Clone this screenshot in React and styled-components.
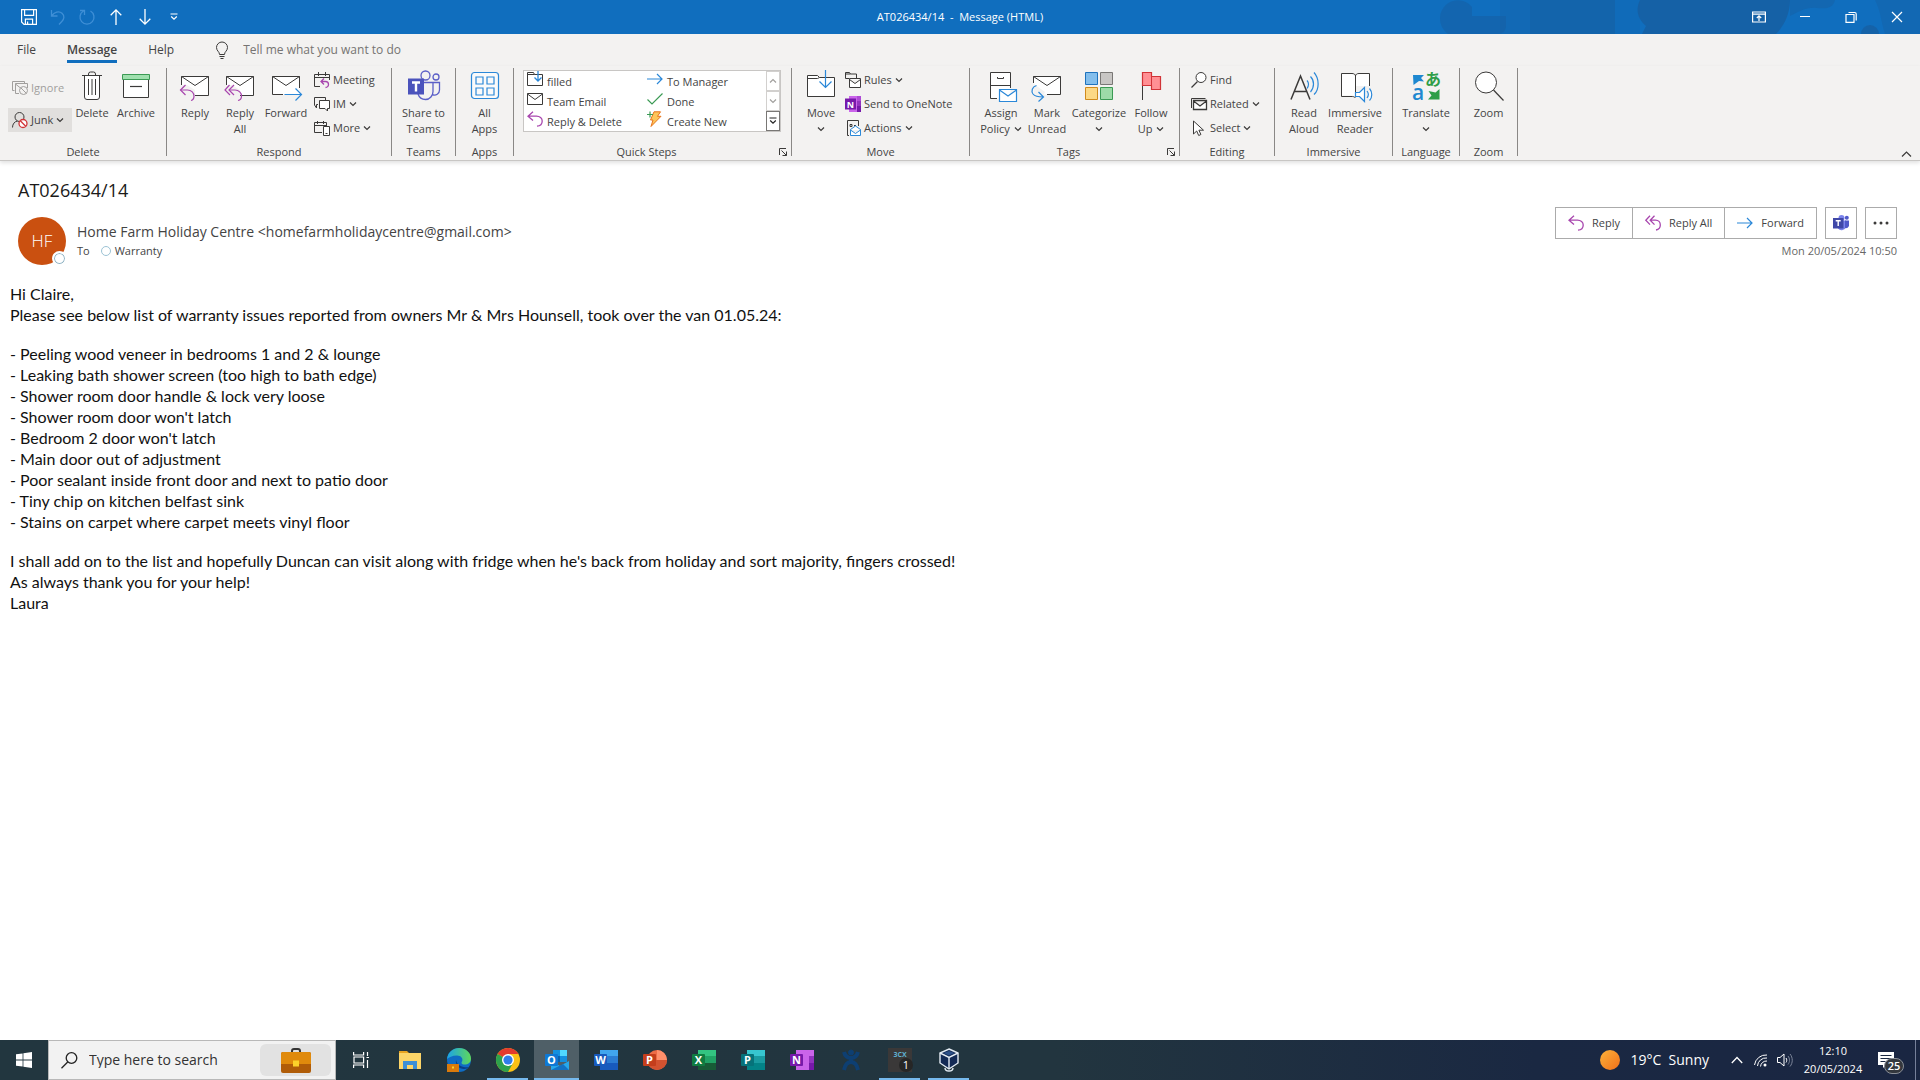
import React from 'react';
import styled, { createGlobalStyle } from 'styled-components';

const GlobalStyle = createGlobalStyle`
  * {
    box-sizing: border-box;
  }

  body {
    margin: 0;
    background: #fff;
    color: #444;
    font-family: 'Open Sans', 'Noto Sans', sans-serif;
    font-size: 11px;
    line-height: 16px;
  }

  button,
  input {
    margin: 0;
    padding: 0;
    border: 0;
    background: none;
    color: inherit;
    font: inherit;
  }

  svg {
    display: block;
    flex: none;
    overflow: visible;
  }
`;

/* ---------- icons ---------- */

const dark = '#3b3a39';
const blue = '#2b88d8';
const purple = '#a846ae';

const Icon = ({ w = 16, h = w, stroke = dark, children, ...rest }) => (
  <svg
    width={w}
    height={h}
    viewBox={`0 0 ${w} ${h}`}
    fill="none"
    stroke={stroke}
    strokeWidth="1"
    aria-hidden="true"
    {...rest}
  >
    {children}
  </svg>
);

const Chevron = ({ up, ...rest }) => (
  <Icon w={8} h={6} strokeWidth="1.2" {...rest}>
    <path d={up ? 'M1 4.5l3-3 3 3' : 'M1 1.5l3 3 3-3'} />
  </Icon>
);

const SaveIcon = () => (
  <Icon stroke="#fff" strokeWidth="1.2">
    <path d="M.6.6h14.8v14.8H3L.6 13zM3.6.8v5.6h9V.8M4.4 15.2v-5h7.2v5M6.6 15v-2.4" />
  </Icon>
);

const UndoIcon = () => (
  <Icon stroke="#3f8fd6" strokeWidth="1.3">
    <path d="M1.5 1v6h6M1.8 6.8C4 3 9 1.600 12 4.200c3 2.600 2 6 0 8L9 15.500" />
  </Icon>
);

const RedoIcon = () => (
  <Icon stroke="#3f8fd6" strokeWidth="1.3">
    <path d="M4.500 2A7 7 0 1 0 11.500 2M1 1.500h4.500V6" />
  </Icon>
);

const UpIcon = () => (
  <Icon w={12} h={16} stroke="#fff" strokeWidth="1.3">
    <path d="M6 16V1M.7 6.200L6 .9l5.300 5.300" />
  </Icon>
);

const DownIcon = () => (
  <Icon w={12} h={16} stroke="#fff" strokeWidth="1.3">
    <path d="M6 0v15M.7 9.800L6 15.100l5.300-5.300" />
  </Icon>
);

const CustomizeIcon = ({ stroke = '#fff' }) => (
  <Icon w={8} h={8} stroke={stroke} strokeWidth="1.2">
    <path d="M.5 1h7M1.200 3.500L4 6.200l2.800-2.700" />
  </Icon>
);

const BulbIcon = () => (
  <Icon w={14} h={17}>
    <path d="M4.500 12.500c0-3-3-3.500-3-7a5.500 5.500 0 0 1 11 0c0 3.500-3 4-3 7zM4.500 14.500h5M5.500 16.500h3" />
  </Icon>
);

const IgnoreIcon = () => (
  <Icon stroke="#a19f9d">
    <path d="M2.500 10.500h-2v-9h12v2M7 13.500H3.500v-10h12V8M3.500 4l5 4" />
    <circle cx="11.500" cy="10.500" r="4" fill="#f3f2f1" />
    <path d="M8.800 7.800l5.400 5.400" />
  </Icon>
);

const JunkIcon = () => (
  <Icon>
    <circle cx="7.500" cy="5" r="4.500" />
    <path d="M.5 15.500C.5 12 2.500 9.500 5.500 9" />
    <circle cx="11" cy="11.500" r="4" fill="#fff" stroke="#d13438" strokeWidth="1.300" />
    <path d="M8.300 8.800l5.400 5.400" stroke="#d13438" strokeWidth="1.300" />
  </Icon>
);

const TrashIcon = () => (
  <Icon w={32}>
    <path d="M8.500 5.500V27a2.500 2.500 0 0 0 2.500 2.500h10a2.500 2.500 0 0 0 2.500-2.500V5.500z" fill="#fff" />
    <path d="M6 5.500h20M12.500 5.500V4a2 2 0 0 1 2-2h3a2 2 0 0 1 2 2v1.500M12.500 9v16M16 9v16M19.500 9v16" />
  </Icon>
);

const ArchiveIcon = () => (
  <Icon w={32}>
    <path d="M3.500 9.500h25v18h-25z" fill="#fff" />
    <path d="M2.500 4.500h27v5h-27z" fill="#9fe0ae" stroke="#3b9a54" />
    <path d="M10 16.500h12" strokeWidth="1.200" />
  </Icon>
);

const Envelope = () => (
  <>
    <path d="M2.500 6.500h27v19h-27z" fill="#fff" stroke="none" />
    <path d="M10 25.500h19.500v-19h-27V17M2.500 6.500L16 15.500l13.500-9" />
  </>
);

const ReplyLargeIcon = ({ all }) => (
  <Icon w={32}>
    <Envelope />
    <path d="M0 15h8l8 5v12H4z" fill="#f3f2f1" stroke="none" />
    <path d="M16 25.500h4" />
    <g stroke={purple} strokeWidth="1.200">
      <path d={all ? 'M5.500 15L1 20l5 5M10 15l-5 5 5 5' : 'M6.500 15l-5 5 5 5'} />
      <path d={all ? 'M5 20h6c4 0 6.500 3 6.500 6 0 2-1 4-3.500 4.500' : 'M1.500 20h7c4 0 6.500 3 6.500 6 0 2-1 4-3 4.500'} />
    </g>
  </Icon>
);

const ForwardLargeIcon = () => (
  <Icon w={32}>
    <path d="M2.500 6.500h27v18h-27z" fill="#fff" stroke="none" />
    <path d="M29.500 18V6.500h-27v18H13M2.500 6.500L16 15.500l13.500-9" />
    <path d="M14.500 24.500H31M25.500 18.500l6 6-6 6" stroke={blue} strokeWidth="1.200" />
  </Icon>
);

const MeetingIcon = () => (
  <Icon>
    <path d="M6 14.500H.5v-12h15V8M.5 5.500h15M4.500 0v4M11.500 0v4" />
    <path d="M10 6.500l-3 3 3 3M7 9.500h4.500a2.500 2.500 0 0 1 0 6" stroke={purple} strokeWidth="1.300" />
  </Icon>
);

const ChatIcon = () => (
  <Icon>
    <path d="M4 8.500H2.500V12L.5 9V1.500h11V4" />
    <path d="M5.500 4.500h10v8h-2V15L11 12.500H5.500z" fill="#fff" />
  </Icon>
);

const MoreIcon = () => (
  <Icon>
    <path d="M8 12.500H.5v-10h12V6M.5 5.500h12M3.500 1v3M9.500 1v3" />
    <path d="M9.500 6.500h6v9h-6zM11.500 13.500h2" fill="#fff" />
  </Icon>
);

const TeamsLargeIcon = () => (
  <Icon w={32} stroke="#5b5fc7">
    <circle cx="17.500" cy="5.500" r="4.500" strokeWidth="1.300" />
    <circle cx="28" cy="7" r="3" strokeWidth="1.300" />
    <path d="M16 12.500h9v9c0 4-3 8-7.500 8S11 27 10 24M25 12.500h6.500V20a5 5 0 0 1-7 4.600" strokeWidth="1.300" />
    <path d="M0 8.500h16v16H0z" fill="#4b53bc" stroke="none" />
    <path d="M4 12.500h8M8 12.500v9" stroke="#fff" strokeWidth="2.400" />
  </Icon>
);

const TeamsSmallIcon = () => (
  <Icon stroke="none">
    <circle cx="8.500" cy="3" r="3" fill="#7b83eb" />
    <circle cx="13.800" cy="2.800" r="2" fill="#5059c9" />
    <path d="M5 5.500h8v6a4.500 4.500 0 0 1-8 2z" fill="#7b83eb" />
    <path d="M12 5.500h4v5a3 3 0 0 1-4 2.500z" fill="#5059c9" />
    <path d="M0 3h10.500v10.500H0z" fill="#4048a8" />
    <path d="M2.700 5.700h5M5.200 5.700V11" stroke="#fff" strokeWidth="1.400" />
  </Icon>
);

const AppsIcon = () => (
  <Icon w={32} stroke={blue} strokeWidth="1.200">
    <rect x="2.500" y="2.500" width="27" height="26" rx="3" fill="#fafafa" />
    <path d="M7 7h7v7H7zM18 7h7v7h-7zM7 18h7v7H7zM18 18h7v7h-7z" />
  </Icon>
);

const FolderInIcon = () => (
  <Icon>
    <path d="M.5 1.500h6l1 2h8v11H.5z" fill="#fff" />
    <path d="M.5 3.500h7" />
    <path d="M11 0v9.500M7.500 6.500L11 10l3.500-3.500" stroke={blue} strokeWidth="1.300" />
  </Icon>
);

const MailIcon = () => (
  <Icon>
    <path d="M.5 2.500h15v11H.5zM.5 3L8 8.500 15.500 3" />
  </Icon>
);

const ReplyIcon = ({ all }) => (
  <Icon stroke={purple} strokeWidth="1.300">
    {all ? (
      <path d="M5 .8L.8 5.200 5 9.600M9.500 .8L5.200 5.200l4.300 4.400M5.200 5.200h5.300c3 0 4.800 2 4.800 4.800 0 2.500-1.500 4.500-4.300 5" />
    ) : (
      <path d="M6 .8L1 5.200l5 4.400M1 5.200h8.500c3.300 0 5.700 2 5.700 4.800 0 2.800-2 5-5.200 5.200" />
    )}
  </Icon>
);

const ForwardIcon = () => (
  <Icon stroke={blue} strokeWidth="1.200">
    <path d="M0 8h15M10 3l5 5-5 5" />
  </Icon>
);

const TickIcon = () => (
  <Icon stroke="#3b9a54" strokeWidth="1.200">
    <path d="M.5 8.500l4.500 4.500L15.500 2.500" />
  </Icon>
);

const BoltIcon = () => (
  <Icon>
    <path d="M7 .8h6.500l-3 4.500h3.500L4 15.500l2-6.500H3.500z" fill="#fcc65a" stroke="#e8731a" />
    <path d="M3 .5v6M0 3.500h6" stroke="#3b9a54" strokeWidth="1.200" />
  </Icon>
);

const MoveLargeIcon = () => (
  <Icon w={32}>
    <path d="M2.500 5.500h10l2 2h15v19h-27z" fill="#fff" />
    <path d="M2.500 8.500h10l2-1" />
    <path d="M20.500 0v17M14.500 11.500l6 6 6-6" stroke={blue} strokeWidth="1.200" />
  </Icon>
);

const RulesIcon = () => (
  <Icon>
    <path d="M4 6.500H.5v-6h4l1 1.500h6v4M.5 2h5" />
    <path d="M4.500 6.500h11v9h-11zM4.500 7.500L10 11.500l5.500-4" fill="#fff" />
  </Icon>
);

const OneNoteSmallIcon = () => (
  <Icon stroke="none">
    <path d="M4 0h12v16H4z" fill="#ca64ea" />
    <path d="M12 0h4v5h-4z" fill="#ae4bd5" />
    <path d="M12 5h4v5h-4z" fill="#9332bf" />
    <path d="M12 10h4v6h-4z" fill="#7719aa" />
    <path d="M0 2.500h11v11H0z" fill="#7719aa" />
    <text x="5.500" y="11.500" fill="#fff" fontSize="9" fontWeight="700" textAnchor="middle">N</text>
  </Icon>
);

const ActionsIcon = () => (
  <Icon>
    <path d="M4 15.500H2.500V.5h11V6M5 4.500h2v2H5zM9 5.500h2" />
    <path d="M5.500 9.500l5-3.500 5 3.500v6h-10zM5.500 10l5 3.500 5-3.500" stroke={blue} fill="#fff" />
  </Icon>
);

const PolicyIcon = () => (
  <Icon w={32}>
    <path d="M5.500 2.500h20v26h-20z" fill="#fff" stroke="none" />
    <path d="M12 28.500H5.500v-26h20V18M5.500 15.500h20M12.500 7v1.500h6V7" />
    <path d="M14.500 19.500h17v12h-17zM14.500 20l8.500 6 8.500-6" stroke={blue} fill="#fff" strokeWidth="1.200" />
  </Icon>
);

const UnreadIcon = () => (
  <Icon w={32}>
    <path d="M2.500 6.500h27v18h-27z" fill="#fff" stroke="none" />
    <path d="M2.500 13V6.500h27v18H16M2.500 6.500L16 15.500l13.500-9" />
    <path d="M3 14L14 22l-2 4-9-2z" fill="#f3f2f1" stroke="none" />
    <path d="M5.500 15.500C1 17 0 21 2 24c2 2.500 5 3 10 3M7.500 22l5 5-5 4.500" stroke={blue} strokeWidth="1.200" />
  </Icon>
);

const CategorizeIcon = () => (
  <Icon w={32}>
    <path d="M2.500 2.500h12v12h-12z" fill="#83beec" stroke="#1e72bd" />
    <path d="M17.500 2.500h12v12h-12z" fill="#c8c6c4" stroke="#797775" />
    <path d="M2.500 17.500h12v12h-12z" fill="#fcd885" stroke="#d08a1c" />
    <path d="M17.500 17.500h12v12h-12z" fill="#9ddba8" stroke="#3b9a54" />
  </Icon>
);

const FlagIcon = () => (
  <Icon w={32}>
    <path d="M7.500 2.500V30" />
    <path d="M7.500 2.500h9v4h9v13h-9v-4h-9z" fill="#ff9094" stroke="#d13438" strokeWidth="1.200" />
    <path d="M16.500 6.500v9" stroke="#d13438" />
  </Icon>
);

const FindIcon = () => (
  <Icon>
    <circle cx="10" cy="5.500" r="5" fill="#fff" />
    <path d="M6.500 9.500l-6 6" strokeWidth="1.200" />
  </Icon>
);

const RelatedIcon = () => (
  <Icon>
    <path d="M.5 12V2.500h14" />
    <path d="M2.500 4.500h13v9h-13zM2.500 5l6.500 5 6.500-5" fill="#fff" strokeWidth="1.300" />
  </Icon>
);

const SelectIcon = () => (
  <Icon>
    <path d="M2.500 1v13l3.200-3 2 4.500 2.200-1-2-4.300h4.600z" fill="#fff" />
  </Icon>
);

const ReadAloudIcon = () => (
  <Icon w={32}>
    <path d="M3 29.500L12.500 6 22 29.500M6 21.500h13" strokeWidth="1.500" />
    <path d="M19 10.500c2 2 2 5.500 0 8M22.500 6.500c4 4 4 11 0 15.500M26 2.500c5.500 6 5.500 17 0 22" stroke={blue} strokeWidth="1.200" />
  </Icon>
);

const ImmersiveIcon = () => (
  <Icon w={32}>
    <path d="M2.500 3.500H14l2.500 2 2.500-2h11.500v22H19l-2.500 2-2.500-2H2.500z" fill="#fff" stroke="none" />
    <path d="M16.500 28c-1-1.500-2.500-1.500-4.500-1.500H2.500v-23H13c2 0 3.500 1 3.500 2.500 0-1.500 1.500-2.500 3.500-2.500h10.500V16M16.500 5.500V24" />
    <path d="M17 16h15v15H17z" fill="#f3f2f1" stroke="none" />
    <path d="M16.500 22.500h4l5-5v14l-5-5h-4zM28 21c1.500 2 1.500 5 0 7M30.500 18.500c3 3.500 3 9 0 12" stroke={blue} strokeWidth="1.200" fill="#fff" />
  </Icon>
);

const TranslateIcon = () => (
  <Icon w={32} stroke="none">
    <path d="M3 5h11l-3 3 3 3.500-5-.5-5.500 4z" fill="#1e88d0" />
    <path d="M18 29.500h11.500V19l-4 3.500-7-1.500 3 4.500z" fill="#2f9e48" />
    <text x="8" y="30" fill="#1e88d0" fontSize="21" fontWeight="600" textAnchor="middle">a</text>
    <text x="23" y="15" fill="#2f9e48" fontSize="16" fontWeight="700" textAnchor="middle" fontFamily="'Noto Sans CJK JP', sans-serif">あ</text>
  </Icon>
);

const ZoomIcon = () => (
  <Icon w={32}>
    <circle cx="13" cy="12.500" r="10.500" fill="#fff" />
    <path d="M20.500 20l10 10.500" strokeWidth="1.200" />
  </Icon>
);

const LauncherIcon = () => (
  <Icon w={8}>
    <path d="M.5 7V.5H7M2.500 2.500l5 5M7.500 3.500v4h-4" />
  </Icon>
);

const RibbonOptionsIcon = () => (
  <Icon w={14} h={12} stroke="#fff" strokeWidth="1.200">
    <path d="M.6 1h12.800v10H.6zM.6 3.200h12.800M7 10V5M4.800 7L7 4.900 9.200 7" />
  </Icon>
);

const MinimizeIcon = () => (
  <Icon w={12} stroke="#fff">
    <path d="M1 5.500h10" />
  </Icon>
);

const RestoreIcon = () => (
  <Icon w={12} stroke="#fff" strokeWidth="1.200">
    <path d="M1 3.500h8V11.400H1zM3.500 1.500h6.200c1 0 1.500.5 1.500 1.500v6.500" />
  </Icon>
);

const CloseIcon = () => (
  <Icon w={12} stroke="#fff" strokeWidth="1.200">
    <path d="M1 1l10 10M11 1L1 11" />
  </Icon>
);

const WindowsLogo = () => (
  <Icon stroke="none">
    <path d="M0 2.300l6.600-.9v6.100H0zM7.400 1.300L16 0v7.500H7.400zM0 8.400h6.600v6.200L0 13.700zM7.400 8.400H16V16l-8.600-1.200z" fill="#fff" />
  </Icon>
);

const SearchIcon = () => (
  <Icon w={17} stroke="#222" strokeWidth="1.300">
    <circle cx="10.500" cy="6" r="5.300" />
    <path d="M6.700 10L.5 16.200" />
  </Icon>
);

const Briefcase = ({ w = 30, h = 25 }) => (
  <svg width={w} height={h} viewBox="0 0 30 25" aria-hidden="true">
    <path d="M11 5V3a2 2 0 0 1 2-2h4a2 2 0 0 1 2 2v2" fill="none" stroke="#333" strokeWidth="2" />
    <rect y="4" width="30" height="21" rx="2" fill="#b05c08" />
    <path d="M0 6a2 2 0 0 1 2-2h26a2 2 0 0 1 2 2v10H0z" fill="#e08a0c" />
    <rect x="12" y="12.500" width="6" height="6" fill="#fcd12a" />
  </svg>
);

const TaskViewIcon = () => (
  <Icon stroke="#fff" strokeWidth="1.200">
    <path d="M.6 0v3h10V0M.6 16v-3h10v3M1 5h9.600v6H1zM14.500 0v4M14.500 8v8M13.500 5.500h2.500" />
  </Icon>
);

const ExplorerIcon = () => (
  <Icon w={24} stroke="none">
    <path d="M1 3h8l2 2H1z" fill="#e8a420" />
    <path d="M1 5h22v16H1z" fill="#fcd568" />
    <path d="M5 13h14v8h-4v-4H9v4H5z" fill="#3c8fd6" />
  </Icon>
);

const EdgeIcon = () => (
  <Icon w={24} stroke="none">
    <defs>
      <linearGradient id="edgeTop" x1="0" x2="1">
        <stop offset="0" stopColor="#1ba3e8" />
        <stop offset="1" stopColor="#5fd85a" />
      </linearGradient>
    </defs>
    <circle cx="12" cy="12" r="12" fill="#0f6cc4" />
    <path d="M0 11C1 4 6 0 12 0c7 0 12 5 12 10.500 0 4-3 6-6.500 6-3 0-3.500-1.500-2.500-3 1.500-3-1-6-5-6-5 0-8 2-10 3.500z" fill="url(#edgeTop)" />
    <path d="M9 12c-1 5 3 9 8 9 3 0 4-1 5-2-3 1-12-.5-13-7z" fill="#0a3f86" />
    <path d="M0 16h12v8H0z" fill="#d97a0c" />
    <path d="M5 18.500h2v2H5z" fill="#fcd12a" />
  </Icon>
);

const ChromeIcon = () => (
  <Icon w={24} stroke="none">
    <circle cx="12" cy="12" r="12" fill="#fbc116" />
    <path d="M12 12L1.600 6A12 12 0 0 1 22.400 6H12z" fill="#e33b2e" />
    <path d="M1.600 6A12 12 0 0 0 12 24l5-9-5-3z" fill="#2da14c" />
    <circle cx="12" cy="12" r="6" fill="#fff" />
    <circle cx="12" cy="12" r="4.600" fill="#2f7de9" />
  </Icon>
);

const OfficeIcon = ({ letter, tones, badge, round }) => (
  <Icon w={24} stroke="none">
    {round ? (
      <>
        <circle cx="14" cy="12" r="10" fill={tones[1]} />
        <path d="M14 2a10 10 0 0 1 10 10H14z" fill={tones[0]} />
        <path d="M4 12h20a10 10 0 0 1-20 0z" fill={tones[2]} />
      </>
    ) : (
      <>
        <path d="M6 2h18v7H6z" fill={tones[0]} />
        <path d="M6 8h18v7H6z" fill={tones[1]} />
        <path d="M6 15h18v7H6z" fill={tones[2]} />
      </>
    )}
    <rect y="6" width="13" height="12" rx="1" fill={badge} />
    <text x="6.500" y="16" fill="#fff" fontSize="11" fontWeight="700" textAnchor="middle">{letter}</text>
  </Icon>
);

const OutlookIcon = () => (
  <Icon w={24} stroke="none">
    <path d="M8 2h14v12H8z" fill="#1490df" />
    <path d="M15 2h7v6h-7z" fill="#50d9ff" />
    <path d="M8 8h7v6H8z" fill="#0a62b0" />
    <path d="M6 13l9 5 9-5v9H6z" fill="#28a8ea" />
    <path d="M6 22l12-6 6 6z" fill="#1272c4" />
    <rect y="6" width="13" height="12" rx="1" fill="#0f78d4" />
    <text x="6.500" y="16" fill="#fff" fontSize="11" fontWeight="700" textAnchor="middle">O</text>
  </Icon>
);

const OneNoteIcon = () => (
  <Icon w={24} stroke="none">
    <path d="M6 2h18v20H6z" fill="#ca64ea" />
    <path d="M19 8h5v7h-5z" fill="#9332bf" />
    <path d="M19 15h5v7h-5z" fill="#7719aa" />
    <rect y="6" width="13" height="12" rx="1" fill="#7719aa" />
    <text x="6.500" y="16" fill="#fff" fontSize="11" fontWeight="700" textAnchor="middle">N</text>
  </Icon>
);

const FigureIcon = () => (
  <Icon w={24} stroke="#0e3f72">
    <circle cx="12" cy="4.500" r="2.500" fill="#0e3f72" />
    <path d="M5 4c1 4 3 6 7 6s6-2 7-6M12 9v5M5 22c1-5 3-8 7-8s6 3 7 8" strokeWidth="4" />
  </Icon>
);

const PhoneAppIcon = () => (
  <Icon w={24} stroke="none">
    <path d="M0 0h24v24H0z" fill="#3a3838" />
    <text x="12" y="9" fill="#5fb0d0" fontSize="7" fontWeight="700" textAnchor="middle">3CX</text>
    <circle cx="18" cy="17" r="7" fill="#262626" />
    <text x="18" y="21" fill="#fff" fontSize="11" textAnchor="middle">1</text>
  </Icon>
);

const BoxIcon = () => (
  <Icon w={24} stroke="#e4ecf4" strokeWidth="1.400">
    <path d="M12 1l9 4v10l-9 6-9-6V5z" fill="#132a55" />
    <path d="M3 5l9 4.500L21 5M12 9.500V21M8 20c0 2 2 3 4 3s4-1 4-3" />
    <path d="M6.500 5L12 3l5.500 2L12 7.500z" fill="#2b4f88" stroke="none" />
  </Icon>
);

const WifiIcon = () => (
  <Icon w={14} stroke="#fff">
    <path d="M.5 12A11.500 11.500 0 0 1 13 2M3.500 13A8.500 8.500 0 0 1 13 5M6.500 13.500A6 6 0 0 1 13 8" />
    <circle cx="11" cy="12" r="1.500" fill="#fff" stroke="none" />
  </Icon>
);

const VolumeIcon = () => (
  <Icon stroke="#fff">
    <path d="M.5 5.500h2.500L7 2v12l-4-3.500H.5zM9 6c1 1.500 1 3 0 4.500" />
    <path d="M11 4c2 2.500 2 6 0 8.500M13 2c3 3.500 3 9 0 12.500" stroke="#7d869a" />
  </Icon>
);

const NoticeIcon = () => (
  <Icon w={16}>
    <path d="M0 0h16v13H8l-3 3v-3H0z" fill="#fff" stroke="none" />
    <path d="M2.500 3.500h11M2.500 6.500h11M2.500 9.500h5" stroke="#1b2942" />
  </Icon>
);

/* ---------- window ---------- */

const Window = styled.div`
  display: flex;
  flex-direction: column;
  min-height: 100vh;
`;

const TitleBar = styled.header`
  position: relative;
  display: grid;
  grid-template-columns: 1fr auto 1fr;
  align-items: center;
  height: 34px;
  overflow: hidden;
  background: #106ebe;
  color: #fff;
`;

const Clouds = styled.svg`
  position: absolute;
  top: 0;
  right: 0;
`;

const QuickAccess = styled.div`
  display: flex;
  align-items: center;
  padding-left: 14px;
`;

const QuickButton = styled.button`
  display: flex;
  align-items: center;
  justify-content: center;
  width: 29px;
  height: 34px;
`;

const WindowTitle = styled.div`
  white-space: pre;
`;

const WindowButtons = styled.div`
  position: relative;
  display: flex;
  justify-content: flex-end;
`;

const WindowButton = styled.button`
  display: flex;
  align-items: center;
  justify-content: center;
  width: 46px;
  height: 32px;
`;

const TabBar = styled.nav`
  display: flex;
  align-items: center;
  gap: 31px;
  height: 32px;
  padding-left: 17px;
  background: #f3f2f1;
  font-size: 12px;
`;

const Tab = styled.button`
  height: 26px;
  border-bottom: 3px solid ${(props) => (props.$active ? '#106ebe' : 'transparent')};
  border-top: 3px solid transparent;
  line-height: 20px;
  font-weight: ${(props) => (props.$active ? 600 : 400)};
`;

const TellMe = styled.label`
  display: flex;
  align-items: center;
  gap: 14px;
  margin-left: 10px;

  input {
    width: 240px;
  }

  input::placeholder {
    color: #767472;
    opacity: 1;
  }
`;

const Ribbon = styled.section`
  display: flex;
  padding-top: 2px;
  height: 95px;
  border-bottom: 1px solid #c8c6c4;
  background: #f3f2f1;
  box-shadow: 0 2px 4px #0000001f;
`;

const RibbonGroup = styled.div`
  display: flex;
  flex-direction: column;
  width: ${(props) => props.$width}px;
`;

const GroupBody = styled.div`
  display: flex;
  justify-content: ${(props) => (props.$center ? 'center' : 'flex-start')};
  height: 76px;
  padding-left: ${(props) => props.$inset || 0}px;
`;

const GroupFooter = styled.div`
  display: flex;
  align-items: center;
  justify-content: center;

  button {
    width: 12px;
  }
`;

const GroupLabel = styled.span`
  flex: ${(props) => (props.$fill ? 1 : 'none')};
  text-align: center;
`;

const Divider = styled.div`
  flex: none;
  width: 1px;
  height: 88px;
  background: #8a8886;
`;

const LargeButton = styled.button`
  display: flex;
  flex-direction: column;
  align-items: center;
  gap: 3px;
  width: ${(props) => props.$width || 60}px;
  padding-top: 2px;
  text-align: center;
  white-space: nowrap;
`;

const LabelLine = styled.span`
  display: flex;
  align-items: center;
  justify-content: center;
  gap: 4px;
  min-height: 16px;
`;

const SmallColumn = styled.div`
  display: flex;
  flex-direction: column;
  align-items: flex-start;
  min-width: ${(props) => (props.$spread ? 64 : 0)}px;
  padding-top: ${(props) => (props.$spread ? 8 : 0)}px;
  gap: ${(props) => (props.$spread ? 8 : 0)}px;
`;

const SmallButton = styled.button`
  display: flex;
  align-items: center;
  gap: 3px;
  height: 24px;
  min-width: ${(props) => (props.$active ? '100%' : 0)};
  padding: 0 4px;
  background: ${(props) => (props.$active ? '#e1dfdd' : 'none')};
  color: ${(props) => (props.disabled ? '#a19f9d' : 'inherit')};
  white-space: nowrap;
`;

const Gallery = styled.div`
  display: flex;
  height: 62px;
  margin-top: 2px;
  border: 1px solid #c8c6c4;
  background: #fff;
`;

const GalleryGrid = styled.div`
  display: grid;
  grid-template-columns: 120px 122px;
  grid-template-rows: repeat(3, 20px);
`;

const GalleryItem = styled.button`
  display: flex;
  align-items: flex-start;
  gap: 4px;
  padding-left: 3px;
  text-align: left;
  line-height: 22px;
`;

const GalleryScroll = styled.div`
  display: flex;
  flex-direction: column;
`;

const GalleryArrow = styled.button`
  display: flex;
  flex: 1;
  align-items: center;
  justify-content: center;
  width: 14px;
  border: 1px solid ${(props) => (props.disabled ? '#d2d0ce' : '#797775')};
`;

const RibbonEnd = styled.div`
  display: flex;
  flex: 1;
  align-items: flex-end;
  justify-content: flex-end;
  padding: 0 8px 2px 0;
`;

const Mail = styled.main`
  flex: 1;
`;

const MailHeader = styled.header`
  display: flex;
  justify-content: space-between;
  padding: 17px 23px 0 18px;
`;

const Subject = styled.h1`
  margin: 0 0 15px;
  color: #1b1a19;
  font-size: 18px;
  font-weight: 400;
  line-height: 24px;
`;

const SenderRow = styled.div`
  display: flex;
  gap: 11px;
`;

const Avatar = styled.div`
  position: relative;
  display: flex;
  align-items: center;
  justify-content: center;
  width: 48px;
  height: 48px;
  border-radius: 50%;
  background: #ca5010;
  color: #fff;
  font-size: 17px;
  font-weight: 300;
`;

const Presence = styled.span`
  position: absolute;
  right: -1px;
  bottom: -1px;
  width: 15px;
  height: 15px;
  border: 2px solid #fff;
  border-radius: 50%;
  background: #fff;
  box-shadow: inset 0 0 0 1px #8fb3c4;
`;

const Sender = styled.div`
  padding-top: 5px;
  font-size: 14px;
  line-height: 20px;
`;

const Recipients = styled.div`
  display: flex;
  align-items: center;
  line-height: 18px;
`;

const RecipientDot = styled.span`
  width: 10px;
  height: 10px;
  margin: 0 4px 0 11px;
  border: 1px solid #9cc3d5;
  border-radius: 50%;
`;

const HeaderSide = styled.div`
  display: flex;
  flex-direction: column;
  align-items: flex-end;
  padding-top: 29px;
  gap: 4px;
`;

const MailActions = styled.div`
  display: flex;
  gap: 8px;
`;

const ActionSet = styled.div`
  display: flex;

  button + button {
    margin-left: -1px;
  }
`;

const ActionButton = styled.button`
  display: flex;
  align-items: center;
  justify-content: center;
  gap: 8px;
  height: 32px;
  min-width: 32px;
  padding: 0 ${(props) => (props.$square ? 0 : 12)}px;
  border: 1px solid #ababab;
  background: #fff;
`;

const Received = styled.time`
  color: #666;
`;

const MailBody = styled.article`
  padding: 18px 10px;
  color: #111;
  font-family: Lato, 'Open Sans', sans-serif;
  font-size: 16px;
  line-height: 21px;

  p {
    margin: 0 0 18px;
  }
`;

const TaskBar = styled.footer`
  display: flex;
  height: 40px;
  background: linear-gradient(90deg, #22363f 0%, #22353f 55%, #1a2842 80%, #1a2642 100%);
  color: #fff;
`;

const StartButton = styled.button`
  display: flex;
  align-items: center;
  justify-content: center;
  width: 48px;
`;

const TaskSearch = styled.label`
  display: flex;
  align-items: center;
  gap: 11px;
  width: 288px;
  padding: 0 4px 0 12px;
  border: 1px solid #b8b8b8;
  background: #f2f2f2;

  input {
    flex: 1;
    min-width: 0;
    font-size: 14px;
  }

  input::placeholder {
    color: #333;
    opacity: 1;
  }
`;

const Highlight = styled.span`
  display: flex;
  align-items: center;
  justify-content: center;
  width: 71px;
  height: 32px;
  border-radius: 6px;
  background: #e2e2e2;
`;

const TaskButton = styled.button`
  display: flex;
  align-items: center;
  justify-content: center;
  width: 49px;
  background: ${(props) => (props.$active ? '#4f5f67' : 'none')};
  box-shadow: ${(props) => (props.$open ? 'inset 0 -2px #76b9ed' : 'none')};
  border: solid transparent;
  border-width: 0 ${(props) => (props.$active ? 2 : 4)}px;
  background-clip: padding-box;
`;

const Tray = styled.div`
  display: flex;
  flex: 1;
  align-items: center;
  justify-content: flex-end;
`;

const Weather = styled.button`
  display: flex;
  align-items: center;
  gap: 10px;
  margin-right: 16px;
  font-size: 14px;
  white-space: pre;
`;

const Sun = styled.span`
  width: 20px;
  height: 20px;
  border-radius: 50%;
  background: linear-gradient(135deg, #fbb23a, #f1701a);
`;

const TrayButton = styled.button`
  display: flex;
  align-items: center;
  justify-content: center;
  width: 24px;
  height: 40px;
`;

const Clock = styled.button`
  width: 72px;
  line-height: 18px;
  text-align: center;
`;

const Notices = styled.button`
  position: relative;
  width: 46px;
  padding-left: 9px;
`;

const NoticeCount = styled.span`
  position: absolute;
  top: 6px;
  left: 15px;
  width: 20px;
  height: 16px;
  border: 1px solid #8a8f98;
  border-radius: 8px;
  background: #33373d;
  font-weight: 600;
  line-height: 14px;
  text-align: center;
`;

const ShowDesktop = styled.button`
  width: 5px;
  height: 40px;
  border-left: 1px solid #76809a;
`;

const Group = ({ label, width, inset, center, launcher, children }) => (
  <>
    <RibbonGroup $width={width}>
      <GroupBody $inset={inset} $center={center}>{children}</GroupBody>
      <GroupFooter>
        <GroupLabel $fill={launcher}>{label}</GroupLabel>
        {launcher && (
          <button aria-label={`${label} options`}>
            <LauncherIcon />
          </button>
        )}
      </GroupFooter>
    </RibbonGroup>
    <Divider />
  </>
);

const Large = ({ icon, lines, width, menu }) => (
  <LargeButton $width={width}>
    {icon}
    <span>
      {lines.map((line, i) => (
        <LabelLine key={i}>
          {line}
          {menu && i === lines.length - 1 && <Chevron />}
        </LabelLine>
      ))}
    </span>
  </LargeButton>
);

const Small = ({ icon, menu, children, ...rest }) => (
  <SmallButton {...rest}>
    {icon}
    {children}
    {menu && <Chevron />}
  </SmallButton>
);

const quickSteps = [
  ['filled', <FolderInIcon />],
  ['To Manager', <ForwardIcon />],
  ['Team Email', <MailIcon />],
  ['Done', <TickIcon />],
  ['Reply & Delete', <ReplyIcon />],
  ['Create New', <BoltIcon />],
];

const issues = [
  'Peeling wood veneer in bedrooms 1 and 2 & lounge',
  'Leaking bath shower screen (too high to bath edge)',
  'Shower room door handle & lock very loose',
  "Shower room door won't latch",
  "Bedroom 2 door won't latch",
  'Main door out of adjustment',
  'Poor sealant inside front door and next to patio door',
  'Tiny chip on kitchen belfast sink',
  'Stains on carpet where carpet meets vinyl floor',
];

const apps = [
  { name: 'Task View', icon: <TaskViewIcon /> },
  { name: 'File Explorer', icon: <ExplorerIcon /> },
  { name: 'Edge', icon: <EdgeIcon /> },
  { name: 'Chrome', icon: <ChromeIcon />, open: true },
  { name: 'Outlook', icon: <OutlookIcon />, open: true, active: true },
  { name: 'Word', icon: <OfficeIcon letter="W" tones={['#41a5ee', '#2b7cd3', '#185abd']} badge="#185abd" /> },
  { name: 'PowerPoint', icon: <OfficeIcon round letter="P" tones={['#ff8f6b', '#ed6c47', '#d35230']} badge="#c43e1c" /> },
  { name: 'Excel', icon: <OfficeIcon letter="X" tones={['#33c481', '#21a366', '#185c37']} badge="#107c41" /> },
  { name: 'Publisher', icon: <OfficeIcon letter="P" tones={['#37c6d0', '#1a9ba1', '#038387']} badge="#06727a" /> },
  { name: 'OneNote', icon: <OneNoteIcon /> },
  { name: 'Assistant', icon: <FigureIcon /> },
  { name: '3CX', icon: <PhoneAppIcon />, open: true },
  { name: 'VirtualBox', icon: <BoxIcon />, open: true },
];

const App = () => (
  <Window>
    <GlobalStyle />
    <TitleBar>
      <Clouds width="500" height="34" viewBox="0 0 500 34" aria-hidden="true">
        <g fill="#165fa3">
          <path d="M110 0h85v34h-85z" opacity=".7" />
          <path d="M80 0h30v34H80z" opacity=".3" />
          <path d="M195 0h25v34h-25z" opacity=".2" />
          <path d="M20 18a18 18 0 0 1 32-11v9h34v10c0 5-4 8-8 8H28c-5-4-8-9-8-16z" opacity=".55" />
          <path d="M220 0h150c0 14-6 26-14 34H222l4-8c-8-7-11-16-6-26z" opacity=".9" />
          <path d="M370 0h45c-2 8-8 9-18 8-12-1-18 4-27 8z" opacity=".5" />
          <circle cx="450" cy="34" r="9" opacity=".8" />
          <path d="M455 0h45v34h-35c-4-12-4-22-10-34z" opacity=".4" />
        </g>
      </Clouds>
      <QuickAccess>
        <QuickButton aria-label="Save"><SaveIcon /></QuickButton>
        <QuickButton aria-label="Undo"><UndoIcon /></QuickButton>
        <QuickButton aria-label="Redo"><RedoIcon /></QuickButton>
        <QuickButton aria-label="Previous item"><UpIcon /></QuickButton>
        <QuickButton aria-label="Next item"><DownIcon /></QuickButton>
        <QuickButton aria-label="Customize toolbar"><CustomizeIcon /></QuickButton>
      </QuickAccess>
      <WindowTitle>{'AT026434/14  -  Message (HTML)'}</WindowTitle>
      <WindowButtons>
        <WindowButton aria-label="Ribbon display options"><RibbonOptionsIcon /></WindowButton>
        <WindowButton aria-label="Minimize"><MinimizeIcon /></WindowButton>
        <WindowButton aria-label="Restore"><RestoreIcon /></WindowButton>
        <WindowButton aria-label="Close"><CloseIcon /></WindowButton>
      </WindowButtons>
    </TitleBar>

    <TabBar>
      <Tab>File</Tab>
      <Tab $active>Message</Tab>
      <Tab>Help</Tab>
      <TellMe>
        <BulbIcon />
        <input type="text" placeholder="Tell me what you want to do" aria-label="Tell me what you want to do" />
      </TellMe>
    </TabBar>

    <Ribbon>
      <Group label="Delete" width={166} inset={8}>
        <SmallColumn $spread>
          <Small icon={<IgnoreIcon />} disabled>Ignore</Small>
          <Small icon={<JunkIcon />} menu $active>Junk</Small>
        </SmallColumn>
        <Large icon={<TrashIcon />} lines={['Delete']} width={40} />
        <Large icon={<ArchiveIcon />} lines={['Archive']} width={48} />
      </Group>
      <Group label="Respond" width={224} inset={5}>
        <Large icon={<ReplyLargeIcon />} lines={['Reply']} width={46} />
        <Large icon={<ReplyLargeIcon all />} lines={['Reply', 'All']} width={44} />
        <Large icon={<ForwardLargeIcon />} lines={['Forward']} width={48} />
        <SmallColumn>
          <Small icon={<MeetingIcon />}>Meeting</Small>
          <Small icon={<ChatIcon />} menu>IM</Small>
          <Small icon={<MoreIcon />} menu>More</Small>
        </SmallColumn>
      </Group>
      <Group label="Teams" width={63} center>
        <Large icon={<TeamsLargeIcon />} lines={['Share to', 'Teams']} />
      </Group>
      <Group label="Apps" width={57} center>
        <Large icon={<AppsIcon />} lines={['All', 'Apps']} width={48} />
      </Group>
      <Group label="Quick Steps" width={277} inset={9} launcher>
        <Gallery>
          <GalleryGrid>
            {quickSteps.map(([name, icon]) => (
              <GalleryItem key={name}>
                {icon}
                {name}
              </GalleryItem>
            ))}
          </GalleryGrid>
          <GalleryScroll>
            <GalleryArrow disabled aria-label="Scroll up"><Chevron up stroke="#a19f9d" /></GalleryArrow>
            <GalleryArrow disabled aria-label="Scroll down"><Chevron stroke="#a19f9d" /></GalleryArrow>
            <GalleryArrow aria-label="More quick steps"><CustomizeIcon stroke="#222" /></GalleryArrow>
          </GalleryScroll>
        </Gallery>
      </Group>
      <Group label="Move" width={177} inset={9}>
        <Large icon={<MoveLargeIcon />} lines={['Move', '']} width={40} menu />
        <SmallColumn>
          <Small icon={<RulesIcon />} menu>Rules</Small>
          <Small icon={<OneNoteSmallIcon />}>Send to OneNote</Small>
          <Small icon={<ActionsIcon />} menu>Actions</Small>
        </SmallColumn>
      </Group>
      <Group label="Tags" width={209} inset={5} launcher>
        <Large icon={<PolicyIcon />} lines={['Assign', 'Policy']} width={52} menu />
        <Large icon={<UnreadIcon />} lines={['Mark', 'Unread']} width={40} />
        <Large icon={<CategorizeIcon />} lines={['Categorize', '']} width={64} menu />
        <Large icon={<FlagIcon />} lines={['Follow', 'Up']} width={40} menu />
      </Group>
      <Group label="Editing" width={94} inset={7}>
        <SmallColumn>
          <Small icon={<FindIcon />}>Find</Small>
          <Small icon={<RelatedIcon />} menu>Related</Small>
          <Small icon={<SelectIcon />} menu>Select</Small>
        </SmallColumn>
      </Group>
      <Group label="Immersive" width={117} inset={5}>
        <Large icon={<ReadAloudIcon />} lines={['Read', 'Aloud']} width={48} />
        <Large icon={<ImmersiveIcon />} lines={['Immersive', 'Reader']} width={54} />
      </Group>
      <Group label="Language" width={66} center>
        <Large icon={<TranslateIcon />} lines={['Translate', '']} menu />
      </Group>
      <Group label="Zoom" width={57} center>
        <Large icon={<ZoomIcon />} lines={['Zoom']} width={48} />
      </Group>
      <RibbonEnd>
        <button aria-label="Collapse the ribbon">
          <Icon w={11} h={8} strokeWidth="1.200"><path d="M1 6.500l4.500-4.500L10 6.500" /></Icon>
        </button>
      </RibbonEnd>
    </Ribbon>

    <Mail>
      <MailHeader>
        <div>
          <Subject>AT026434/14</Subject>
          <SenderRow>
            <Avatar>
              HF
              <Presence />
            </Avatar>
            <div>
              <Sender>Home Farm Holiday Centre &lt;homefarmholidaycentre@gmail.com&gt;</Sender>
              <Recipients>
                To
                <RecipientDot />
                Warranty
              </Recipients>
            </div>
          </SenderRow>
        </div>
        <HeaderSide>
          <MailActions>
            <ActionSet>
              <ActionButton><ReplyIcon />Reply</ActionButton>
              <ActionButton><ReplyIcon all />Reply All</ActionButton>
              <ActionButton><ForwardIcon />Forward</ActionButton>
            </ActionSet>
            <ActionButton $square aria-label="Share to Teams"><TeamsSmallIcon /></ActionButton>
            <ActionButton $square aria-label="More actions">
              <Icon fill={dark} stroke="none">
                <circle cx="2" cy="8" r="1.500" />
                <circle cx="8" cy="8" r="1.500" />
                <circle cx="14" cy="8" r="1.500" />
              </Icon>
            </ActionButton>
          </MailActions>
          <Received>Mon 20/05/2024 10:50</Received>
        </HeaderSide>
      </MailHeader>
      <MailBody>
        <p>
          Hi Claire,
          <br />
          Please see below list of warranty issues reported from owners Mr &amp; Mrs Hounsell, took over the van 01.05.24:
        </p>
        <p>
          {issues.map((issue) => (
            <React.Fragment key={issue}>
              - {issue}
              <br />
            </React.Fragment>
          ))}
        </p>
        <p>
          I shall add on to the list and hopefully Duncan can visit along with fridge when he's back from holiday and
          sort majority, fingers crossed!
          <br />
          As always thank you for your help!
          <br />
          Laura
        </p>
      </MailBody>
    </Mail>

    <TaskBar>
      <StartButton aria-label="Start"><WindowsLogo /></StartButton>
      <TaskSearch>
        <SearchIcon />
        <input type="text" placeholder="Type here to search" aria-label="Type here to search" />
        <Highlight><Briefcase /></Highlight>
      </TaskSearch>
      {apps.map((app) => (
        <TaskButton key={app.name} aria-label={app.name} $open={app.open} $active={app.active}>
          {app.icon}
        </TaskButton>
      ))}
      <Tray>
        <Weather>
          <Sun />
          {'19°C  Sunny'}
        </Weather>
        <TrayButton aria-label="Show hidden icons">
          <Icon w={12} h={8} stroke="#fff" strokeWidth="1.300"><path d="M.8 7L6 1.500 11.200 7" /></Icon>
        </TrayButton>
        <TrayButton aria-label="Network"><WifiIcon /></TrayButton>
        <TrayButton aria-label="Volume"><VolumeIcon /></TrayButton>
        <Clock>
          12:10
          <br />
          20/05/2024
        </Clock>
        <Notices aria-label="25 notifications">
          <NoticeIcon />
          <NoticeCount>25</NoticeCount>
        </Notices>
        <ShowDesktop aria-label="Show desktop" />
      </Tray>
    </TaskBar>
  </Window>
);

export default App;
